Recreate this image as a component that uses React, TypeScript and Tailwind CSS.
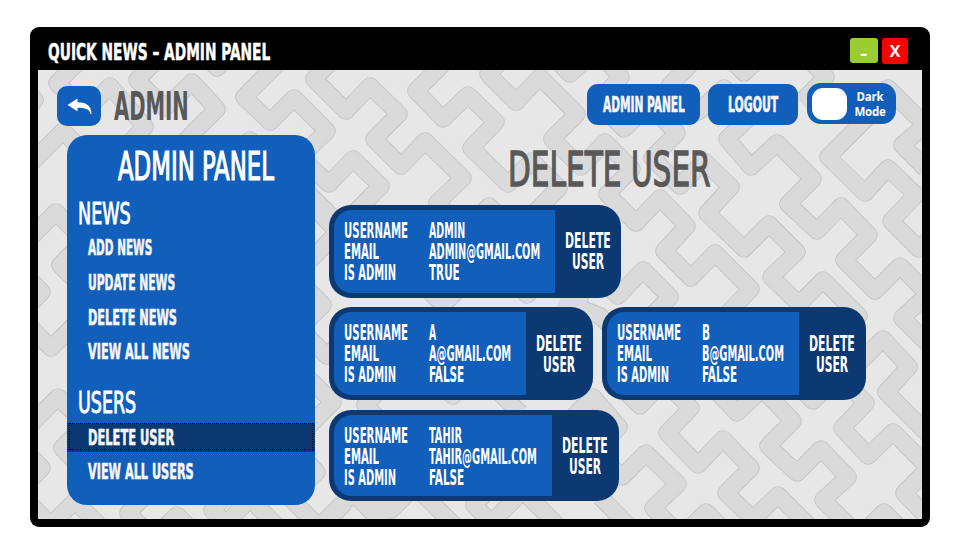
import { useLayoutEffect, useRef, useState } from "react";

type FitProps = { text: string; w: number; cap: number; className?: string };

// Condensed display lettering: sized by cap height, squeezed to a given width.
function Fit({ text, w, cap, className = "" }: FitProps) {
  const ref = useRef<HTMLSpanElement>(null);
  const [scale, setScale] = useState(0.5);
  useLayoutEffect(() => {
    if (ref.current) setScale(w / ref.current.offsetWidth);
  }, [text, w, cap]);
  return (
    <span className={`flex shrink-0 items-center ${className}`} style={{ width: w, height: cap }}>
      <span
        ref={ref}
        className="shrink-0 origin-left whitespace-nowrap leading-none"
        style={{ fontSize: cap / 0.729, transform: `translateY(0.03em) scaleX(${scale})` }}
      >
        {text}
      </span>
    </span>
  );
}

// Centre lines of the interlocking background bands, in window content coordinates.
const bands = [
  "110,30 57,83 85,111 110,86 145,127 120,152",
  "10,184 38,156 63,131 90,158",
  "10,75 35,100 10,125",
  "172,45 137,80 165,108 192,82 217,109 180,146",
  "190,41 217,68 250,35",
  "225,165 250,140 280,170",
  "290,51 244,97 270,122 294,98 327,131 300,157 329,184 353,159 381,186 356,211 384,239",
  "300,185 360,245",
  "350,43 314,79 346,111 370,86 399,114 374,139 401,166 425,141 463,178 437,203 464,231 489,206 525,242 500,267 527,295 552,270 580,298 555,323",
  "462,45 416,91 443,119 468,95 496,122 471,148 508,184 532,161 559,188 535,212 563,240 587,216 610,240 583,265 618,296 643,270 670,297 646,321 673,348 697,324 733,360 709,384 737,413 762,389 793,421 768,446 797,473 821,449 848,477 823,500 850,527",
  "520,43 488,74 516,102 540,77 577,114 552,139 581,167 605,142 632,169 607,194 636,223 660,198 687,226 664,251 691,278 715,253 751,289 725,316",
  "545,49 570,74 597,50 621,77 597,102 624,129 649,105 677,133 652,158 680,186 704,161 731,187 707,213 744,249 769,224 797,252 771,277 799,304 823,280 859,316 835,340 859,363 883,339 909,367 886,392 930,436",
  "705,50 670,85 698,112 724,88 752,114 727,139 751,167 777,143 813,179 788,204 817,231 841,206 869,235 844,260 875,291 900,266 928,294 902,318 930,346",
  "716,45 744,73 776,43",
  "800,51 826,77 801,102",
  "878,107 828,157 865,193 888,168 916,195 891,221 919,249 944,224",
  "850,126 888,88 925,125 902,145 926,169",
  "440,268 460,288 443,305 420,282",
  "80,237 56,212 25,243",
  "85,240 60,265 90,295",
  "17,267 42,292 17,317",
  "20,317 51,348 80,319",
  "25,430 58,397 90,429",
  "90,420 62,448 92,478",
  "17,443 42,468 17,493",
  "20,494 51,525 75,501 105,531",
  "150,491 128,513 150,535",
  "150,541 177,515 205,543",
  "235,487 212,510 240,538",
  "225,524 250,499 285,534",
  "285,493 320,528 345,503",
  "290,498 317,472 290,445",
  "310,204 338,232 310,260",
  "300,282 323,305 300,328",
  "295,324 327,356 355,328",
  "300,370 333,402 305,430",
  "350,340 390,380 365,405 395,435",
  "425,368 453,396 478,371 520,413",
  "320,526 353,493 385,525",
  "353,472 391,510 415,486 455,526",
  "500,479 474,505 500,531",
  "495,519 523,491 565,533",
  "565,425 593,397 619,427 595,452 622,477 646,453 678,484 653,508 680,535",
  "600,497 640,537",
  "610,376 640,406 664,381 691,408 667,433 698,465 723,439 751,468 726,493 753,519 778,495 815,532",
  "785,373 813,401 838,376 866,403 842,428 868,456 893,432 929,468 904,493 930,520",
  "680,538 706,512 732,538",
  "858,538 884,512 910,538",
  "560,300 600,316 620,336",
];

function Pattern() {
  return (
    <svg className="absolute inset-0 h-full w-full" viewBox="38 70 884 449" fill="none" strokeLinejoin="round">
      <g stroke="#c3c4c5" strokeWidth="17.6">
        {bands.map((b) => <polyline key={b} points={b} />)}
      </g>
      <g stroke="#dadada" strokeWidth="15.8">
        {bands.map((b) => <polyline key={b} points={b} />)}
      </g>
    </svg>
  );
}

type User = { name: string; nw: number; mail: string; mw: number; admin: string; aw: number; body: string; tall: string };

function UserCard({ u }: { u: User }) {
  return (
    <article className={`flex shrink-0 rounded-[22px] bg-[#0c3972] py-[5px] pl-[5px] ${u.tall}`}>
      <div className={`flex gap-[21px] rounded-l-[18px] bg-[#125ebb] pl-[10px] pt-[13px] ${u.body}`}>
        <div className="flex w-[64px] shrink-0 flex-col gap-[6px]">
          <Fit text="USERNAME" w={64} cap={15} />
          <Fit text="EMAIL" w={35} cap={15} />
          <Fit text="IS ADMIN" w={52} cap={15} />
        </div>
        <div className="flex flex-col gap-[6px]">
          <Fit text={u.name} w={u.nw} cap={15} />
          <Fit text={u.mail} w={u.mw} cap={15} />
          <Fit text={u.admin} w={u.aw} cap={15} />
        </div>
      </div>
      <button className="flex w-[66px] flex-col items-center justify-center gap-[6px]">
        <Fit text="DELETE" w={46} cap={15} />
        <Fit text="USER" w={32} cap={15} />
      </button>
    </article>
  );
}

const users: User[] = [
  { name: "ADMIN", nw: 36, mail: "ADMIN@GMAIL.COM", mw: 111, admin: "TRUE", aw: 31, body: "w-[221px]", tall: "h-[92.5px] w-[292px]" },
  { name: "A", nw: 7, mail: "A@GMAIL.COM", mw: 82, admin: "FALSE", aw: 35, body: "w-[192px]", tall: "h-[93px] w-[264px]" },
  { name: "B", nw: 8, mail: "B@GMAIL.COM", mw: 82, admin: "FALSE", aw: 35, body: "w-[192px]", tall: "h-[93px] w-[264px]" },
  { name: "TAHIR", nw: 33, mail: "TAHIR@GMAIL.COM", mw: 108, admin: "FALSE", aw: 35, body: "w-[218px]", tall: "h-[91px] w-[290px]" },
];

function NavItem({ text, w, active = false }: { text: string; w: number; active?: boolean }) {
  return (
    <div className={`flex items-center pl-[20.5px] ${active ? "h-[29px] bg-[#0c3972]" : "h-[29px]"} relative`}>
      <Fit text={text} w={w} cap={15} className="text-[#f6f6f6] [-webkit-text-stroke:0.6px]" />
      {active && <span className="absolute inset-x-[2px] bottom-[2px] top-0 border border-dotted border-black" />}
    </div>
  );
}

export default function App() {
  return (
    <div className="h-[552px] w-[960px] overflow-hidden bg-white pl-[30px] pt-[27px] font-['DejaVu_Sans_Condensed','DejaVu_Sans',sans-serif] font-bold text-white">
      <div className="flex h-[500px] w-[900px] flex-col rounded-[9px] bg-black px-[8px] pb-[8px]">
        <header className="flex h-[43px] shrink-0 items-center pl-[10px] pr-[14px] pt-[6px]">
          <Fit text="QUICK NEWS – ADMIN PANEL" w={222} cap={17} className="-mt-[2px] [-webkit-text-stroke:0.5px]" />
          <div className="-mt-px ml-auto flex gap-[4px] font-['Open_Sans',sans-serif]">
            <button className="flex h-[25px] w-[28px] items-center justify-center rounded-[3px] bg-[#9acd32] pt-[7px]">
              <span className="scale-x-125 text-[17px] leading-[16px]">-</span>
            </button>
            <button className="flex h-[26px] w-[26px] items-center justify-center rounded-[3px] bg-[#ff0000] text-[16px]">X</button>
          </div>
        </header>

        <main className="relative h-[449px] overflow-hidden bg-[#e7e7e7]">
          <Pattern />
          <div className="relative flex h-[65px] pl-[19px] pt-[13px]">
            <button className="mt-[3px] flex h-[40px] w-[44px] items-center justify-center rounded-[10px] bg-[#125ebb]">
              <svg width="25" height="17" viewBox="0 0 25 17" fill="white">
                <path d="M0.5 7 10.5 0.5V4.3C18 4.4 24.5 7 24.5 16H23.5C22.5 11 18 9.8 10.5 9.8V13.3Z" />
              </svg>
            </button>
            <Fit text="ADMIN" w={75} cap={28} className="ml-[13px] mt-[9px] text-[#585858]" />
            <div className="ml-auto flex pr-[26px]">
              <button className="mt-px flex h-[40.5px] w-[113px] items-center justify-center rounded-[11px] bg-[#125ebb]">
                <Fit text="ADMIN PANEL" w={82} cap={15} className="text-[#f6f6f6] [-webkit-text-stroke:0.6px]" />
              </button>
              <button className="ml-[8px] mt-px flex h-[40.5px] w-[90px] items-center justify-center rounded-[11px] bg-[#125ebb]">
                <Fit text="LOGOUT" w={50} cap={15} className="text-[#f6f6f6] [-webkit-text-stroke:0.6px]" />
              </button>
              <button className="ml-[9px] flex h-[41px] w-[89px] items-center rounded-[14px] bg-[#125ebb] pl-[5px]">
                <span className="h-[32px] w-[35px] rounded-[11px] bg-white" />
                <span className="ml-[5px] w-[36px] pt-px text-center font-['Open_Sans',sans-serif] text-[11.5px] font-bold leading-[15px] tracking-[-0.2px]">
                  Dark Mode
                </span>
              </button>
            </div>
          </div>

          <div className="relative flex">
            <aside className="ml-[29px] h-[370px] w-[248px] shrink-0 rounded-[20px] bg-[#125ebb] pt-[17px]">
              <Fit text="ADMIN PANEL" w={156} cap={28} className="ml-[51px] font-normal [-webkit-text-stroke:1.2px]" />
              <Fit text="NEWS" w={53} cap={21.5} className="ml-[10.5px] mt-[22.5px] font-normal [-webkit-text-stroke:0.9px]" />
              <nav className="mt-[9px] flex flex-col gap-[5.7px]">
                <NavItem text="ADD NEWS" w={64} />
                <NavItem text="UPDATE NEWS" w={87} />
                <NavItem text="DELETE NEWS" w={89} />
                <NavItem text="VIEW ALL NEWS" w={102} />
              </nav>
              <Fit text="USERS" w={58} cap={21.5} className="ml-[10.5px] mt-[25.5px] font-normal [-webkit-text-stroke:0.9px]" />
              <nav className="mt-[10px] flex flex-col gap-[5px]">
                <NavItem text="DELETE USER" w={86} active />
                <NavItem text="VIEW ALL USERS" w={106} />
              </nav>
            </aside>

            <section className="ml-[14px] pt-[15px]">
              <Fit text="DELETE USER" w={203} cap={35} className="ml-[179px] font-normal text-[#585858] [-webkit-text-stroke:1.3px]" />
              <div className="mt-[20px] flex w-[560px] flex-wrap gap-x-[9px] gap-y-[9.7px]">
                <div className="w-full">
                  <UserCard u={users[0]} />
                </div>
                <UserCard u={users[1]} />
                <UserCard u={users[2]} />
                <UserCard u={users[3]} />
              </div>
            </section>
          </div>
        </main>
      </div>
    </div>
  );
}
